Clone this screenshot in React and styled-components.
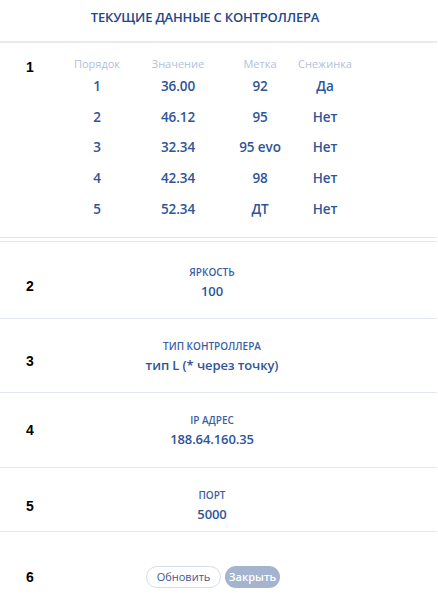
import React from "react";
import styled, { createGlobalStyle } from "styled-components";

const GlobalStyle = createGlobalStyle`
  html, body {
    margin: 0;
    padding: 0;
    background: #ffffff;
    font-family: "Open Sans", "Noto Sans", sans-serif;
  }
`;

const rows = [
  { order: 1, value: "36.00", label: "92", snow: "Да" },
  { order: 2, value: "46.12", label: "95", snow: "Нет" },
  { order: 3, value: "32.34", label: "95 evo", snow: "Нет" },
  { order: 4, value: "42.34", label: "98", snow: "Нет" },
  { order: 5, value: "52.34", label: "ДТ", snow: "Нет" },
];

const fields = [
  { num: 2, title: "ЯРКОСТЬ", value: "100", numTop: 36, top: 23, bottom: 17 },
  { num: 3, title: "ТИП КОНТРОЛЛЕРА", value: "тип L (* через точку)", numTop: 34, top: 20, bottom: 17 },
  { num: 4, title: "IP АДРЕС", value: "188.64.160.35", numTop: 29, top: 20, bottom: 18 },
  { num: 5, title: "ПОРТ", value: "5000", numTop: 30, top: 20, bottom: 7 },
];

const App = () => {
  return (
    <Page>
      <GlobalStyle />
      <Header>
        <HeaderTitle>ТЕКУЩИЕ ДАННЫЕ С КОНТРОЛЛЕРА</HeaderTitle>
      </Header>

      <Section>
        <Num $top={16}>1</Num>
        <Table>
          <HeadCell>Порядок</HeadCell>
          <HeadCell>Значение</HeadCell>
          <HeadCell>Метка</HeadCell>
          <HeadCell>Снежинка</HeadCell>
          {rows.map((r) => (
            <React.Fragment key={r.order}>
              <Cell>{r.order}</Cell>
              <Cell>{r.value}</Cell>
              <Cell>{r.label}</Cell>
              <Cell>{r.snow}</Cell>
            </React.Fragment>
          ))}
        </Table>
      </Section>
      <Gap />

      {fields.map((f) => (
        <Section key={f.num}>
          <Num $top={f.numTop}>{f.num}</Num>
          <Field $top={f.top} $bottom={f.bottom}>
            <FieldTitle>{f.title}</FieldTitle>
            <FieldValue>{f.value}</FieldValue>
          </Field>
        </Section>
      ))}

      <Section $last>
        <Num $top={37}>6</Num>
        <Buttons>
          <OutlineButton>Обновить</OutlineButton>
          <FilledButton>Закрыть</FilledButton>
        </Buttons>
      </Section>
    </Page>
  );
};

export default App;

const Page = styled.div`
  width: 437px;
  height: 600px;
  overflow: hidden;
  display: flex;
  flex-direction: column;
`;

const Header = styled.div`
  height: 41px;
  border-bottom: 2px solid #e8eaf4;
`;

const HeaderTitle = styled.div`
  width: 410px;
  line-height: 34px;
  text-align: center;
  font-size: 13px;
  font-weight: 600;
  letter-spacing: -0.2px;
  color: #23478a;
`;

const Section = styled.div`
  display: grid;
  grid-template-columns: 60px 304px;
  border-bottom: ${(p) => (p.$last ? "none" : "1px solid #e3e7f0")};
`;

const Gap = styled.div`
  height: 3px;
  border-bottom: 1px solid #e3e7f0;
`;

const Num = styled.div`
  padding-top: ${(p) => p.$top}px;
  text-align: center;
  font-family: "Liberation Sans", Arial, sans-serif;
  font-weight: 700;
  font-size: 14px;
  line-height: 16px;
  color: #000;
`;

const Table = styled.div`
  display: grid;
  grid-template-columns: 74px 88px 76px 54px;
  grid-template-rows: 14px repeat(5, 30.6px);
  align-items: center;
  padding: 14px 0 13px;
`;

const HeadCell = styled.div`
  text-align: center;
  font-size: 11px;
  line-height: 14px;
  color: #b3bfd8;
`;

const Cell = styled.div`
  text-align: center;
  font-size: 13.5px;
  font-weight: 600;
  letter-spacing: -0.1px;
  line-height: 20px;
  color: #2f5598;
  white-space: nowrap;
`;

const Field = styled.div`
  display: flex;
  flex-direction: column;
  align-items: center;
  gap: 2px;
  padding-top: ${(p) => p.$top}px;
  padding-bottom: ${(p) => p.$bottom}px;
`;

const FieldTitle = styled.div`
  font-size: 10px;
  font-weight: 600;
  line-height: 14px;
  color: #3a5fa3;
`;

const FieldValue = styled.div`
  font-size: 13px;
  font-weight: 600;
  letter-spacing: -0.1px;
  line-height: 20px;
  color: #2f5598;
`;

const Buttons = styled.div`
  display: flex;
  justify-content: center;
  gap: 4px;
  padding-top: 34px;
  padding-left: 2px;
`;

const ButtonBase = styled.button`
  height: 22px;
  border-radius: 11px;
  font-family: "Open Sans", "Noto Sans", sans-serif;
  font-size: 11px;
  padding: 0;
  cursor: pointer;
`;

const OutlineButton = styled(ButtonBase)`
  width: 75px;
  background: #fff;
  border: 1px solid #d6ddf0;
  color: #3e5894;
`;

const FilledButton = styled(ButtonBase)`
  width: 55px;
  background: #a4b3cf;
  border: none;
  color: #fff;
  font-weight: 600;
`;
